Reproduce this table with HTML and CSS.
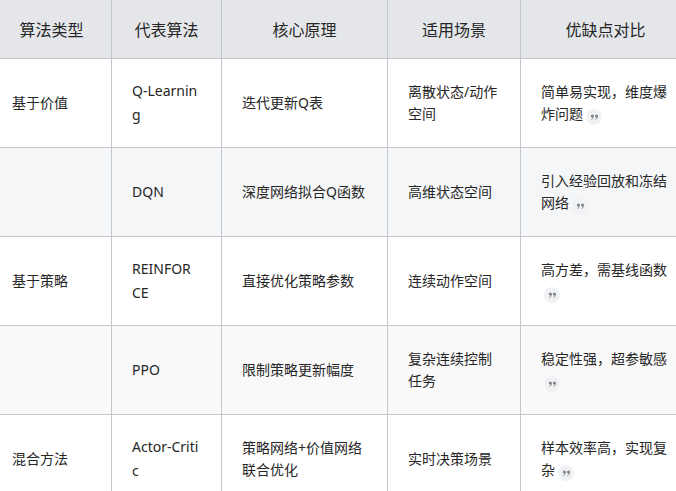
FILE: index.html
```html
<!DOCTYPE html>
<html lang="zh-CN">
<head>
<meta charset="utf-8">
<title>强化学习算法对比</title>
<link rel="stylesheet" href="styles.css">
</head>
<body>
<div class="wrap">
<table class="cmp">
  <colgroup>
    <col class="c1"><col class="c2"><col class="c3"><col class="c4"><col class="c5">
  </colgroup>
  <thead>
    <tr><th>算法类型</th><th>代表算法</th><th>核心原理</th><th>适用场景</th><th>优缺点对比</th></tr>
  </thead>
  <tbody>
    <tr>
      <td>基于价值</td><td class="algo">Q-Learning</td><td>迭代更新Q表</td><td>离散状态/动作空间</td>
      <td>简单易实现，维度爆炸问题<span class="cite"><svg viewBox="0 0 10 10" width="9" height="9"><circle cx="2.6" cy="3.4" r="1.7"/><path d="M4.3 3.4C4.3 5.5 3.2 7 1.3 7.7L1.1 7.1C2.2 6.6 2.8 5.8 2.9 4.9Z"/><circle cx="7.2" cy="3.4" r="1.7"/><path d="M8.9 3.4C8.9 5.5 7.8 7 5.9 7.7L5.7 7.1C6.8 6.6 7.4 5.8 7.5 4.9Z"/></svg></span></td>
    </tr>
    <tr class="alt">
      <td></td><td class="algo">DQN</td><td>深度网络拟合Q函数</td><td>高维状态空间</td>
      <td>引入经验回放和冻结网络<span class="cite"><svg viewBox="0 0 10 10" width="9" height="9"><circle cx="2.6" cy="3.4" r="1.7"/><path d="M4.3 3.4C4.3 5.5 3.2 7 1.3 7.7L1.1 7.1C2.2 6.6 2.8 5.8 2.9 4.9Z"/><circle cx="7.2" cy="3.4" r="1.7"/><path d="M8.9 3.4C8.9 5.5 7.8 7 5.9 7.7L5.7 7.1C6.8 6.6 7.4 5.8 7.5 4.9Z"/></svg></span></td>
    </tr>
    <tr>
      <td>基于策略</td><td class="algo">REINFORCE</td><td>直接优化策略参数</td><td>连续动作空间</td>
      <td>高方差，需基线函数<span class="cite"><svg viewBox="0 0 10 10" width="9" height="9"><circle cx="2.6" cy="3.4" r="1.7"/><path d="M4.3 3.4C4.3 5.5 3.2 7 1.3 7.7L1.1 7.1C2.2 6.6 2.8 5.8 2.9 4.9Z"/><circle cx="7.2" cy="3.4" r="1.7"/><path d="M8.9 3.4C8.9 5.5 7.8 7 5.9 7.7L5.7 7.1C6.8 6.6 7.4 5.8 7.5 4.9Z"/></svg></span></td>
    </tr>
    <tr class="alt2">
      <td></td><td class="algo">PPO</td><td>限制策略更新幅度</td><td>复杂连续控制任务</td>
      <td>稳定性强，超参敏感<span class="cite"><svg viewBox="0 0 10 10" width="9" height="9"><circle cx="2.6" cy="3.4" r="1.7"/><path d="M4.3 3.4C4.3 5.5 3.2 7 1.3 7.7L1.1 7.1C2.2 6.6 2.8 5.8 2.9 4.9Z"/><circle cx="7.2" cy="3.4" r="1.7"/><path d="M8.9 3.4C8.9 5.5 7.8 7 5.9 7.7L5.7 7.1C6.8 6.6 7.4 5.8 7.5 4.9Z"/></svg></span></td>
    </tr>
    <tr>
      <td>混合方法</td><td class="algo">Actor-Critic</td><td>策略网络+价值网络联合优化</td><td>实时决策场景</td>
      <td>样本效率高，实现复杂<span class="cite"><svg viewBox="0 0 10 10" width="9" height="9"><circle cx="2.6" cy="3.4" r="1.7"/><path d="M4.3 3.4C4.3 5.5 3.2 7 1.3 7.7L1.1 7.1C2.2 6.6 2.8 5.8 2.9 4.9Z"/><circle cx="7.2" cy="3.4" r="1.7"/><path d="M8.9 3.4C8.9 5.5 7.8 7 5.9 7.7L5.7 7.1C6.8 6.6 7.4 5.8 7.5 4.9Z"/></svg></span></td>
    </tr>
  </tbody>
</table>
</div>
</body>
</html>
```

FILE: styles.css
```css
html, body {
  margin: 0;
  padding: 0;
  background: #ffffff;
  overflow: hidden;
}
body {
  font-family: "Noto Sans", "Noto Sans CJK SC", sans-serif;
  color: #262626;
}
.wrap {
  width: 676px;
  height: 491px;
  overflow: hidden;
}
.cmp {
  border-collapse: collapse;
  table-layout: fixed;
  width: 699px;
  margin-left: -9px;
  margin-top: -1px;
}
.c1 { width: 120px; }
.c2 { width: 110px; }
.c3 { width: 166px; }
.c4 { width: 133px; }
.c5 { width: 170px; }
.cmp th, .cmp td {
  border: 1px solid #c3c6cc;
  padding: 0 20px;
  vertical-align: middle;
  word-break: break-all;
}
.cmp th {
  height: 58px;
  background: #e5e6ea;
  font-weight: 400;
  font-size: 16px;
  text-align: center;
  color: #262626;
}
.cmp td {
  height: 88px;
  font-size: 14px;
  line-height: 22px;
  text-align: left;
}
.cmp td.algo {
  font-size: 14px;
  line-height: 24px;
  padding-right: 22px;
}
.alt td { background: #f5f6f8; }
.alt2 td { background: #f9f9fa; }
.cite {
  display: inline-flex;
  align-items: center;
  justify-content: center;
  width: 16px;
  height: 16px;
  margin-left: 3px;
  border-radius: 50%;
  background: #f1f2f4;
  vertical-align: -3px;
}
.cite svg { fill: #7d828c; }
```
